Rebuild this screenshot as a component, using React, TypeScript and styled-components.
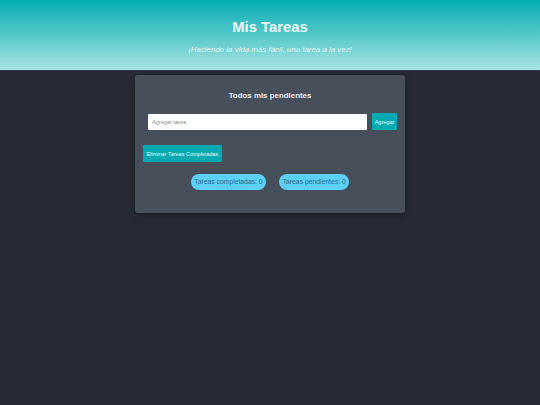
import React from "react";
import styled, { createGlobalStyle } from "styled-components";

const Global = createGlobalStyle`
  html, body { margin: 0; padding: 0; background: #262a35; }
  body { font-family: "Liberation Sans", Arial, sans-serif; min-height: 405px; }
  * { box-sizing: border-box; }
`;

const Header = styled.header`
  height: 71px;
  background: linear-gradient(180deg, #04acb4 0%, #55c8c8 50%, #a8e4e2 100%);
  border-bottom: 1px solid #2e3b47;
  display: flex;
  flex-direction: column;
  align-items: center;
  padding-top: 18px;
`;

const Title = styled.h1`
  margin: 0;
  font-size: 14.8px;
  line-height: 18px;
  font-weight: 700;
  color: #eafafa;
`;

const Subtitle = styled.p`
  margin: 9px 0 0;
  font-size: 7.9px;
  line-height: 10px;
  font-style: italic;
  color: rgba(240, 252, 252, 0.88);
`;

const Card = styled.main`
  width: 270px;
  margin: 4px auto 0;
  background: #474f5a;
  border-radius: 3px;
  box-shadow: 0 2px 6px rgba(0, 0, 0, 0.35);
  padding: 16px 8px 23px;
  display: flex;
  flex-direction: column;
`;

const CardTitle = styled.h2`
  margin: 0;
  text-align: center;
  font-size: 7.9px;
  line-height: 10px;
  font-weight: 700;
  color: #e9ecef;
`;

const InputRow = styled.div`
  margin-top: 12px;
  padding-left: 5px;
  display: flex;
  align-items: center;
  gap: 5px;
`;

const TaskInput = styled.input`
  flex: 1;
  min-width: 0;
  height: 16px;
  border: none;
  border-radius: 1px;
  background: #ffffff;
  padding: 0 4px;
  font-family: inherit;
  font-size: 5.6px;
  color: #333;
  outline: none;
  &::placeholder { color: #8a8a8a; }
`;

const TealButton = styled.button`
  height: 17px;
  border: none;
  border-radius: 1px;
  background: #03a9b0;
  color: #e8fbfb;
  font-family: inherit;
  font-size: 5.5px;
  padding: 0 3px;
  cursor: pointer;
  white-space: nowrap;
`;

const AddButton = styled(TealButton)`
  width: 25px;
  padding: 0;
`;

const ClearButton = styled(TealButton)`
  align-self: flex-start;
  margin-top: 15px;
  width: 79px;
`;

const Stats = styled.div`
  margin-top: 12px;
  display: flex;
  justify-content: center;
  gap: 13px;
`;

const Pill = styled.span`
  height: 16px;
  padding: 0 3.5px;
  border-radius: 8px;
  background: #5cd0f6;
  color: #2a6f90;
  font-size: 6.8px;
  line-height: 16px;
  white-space: nowrap;
`;

export default function App() {
  const completed = 0;
  const pending = 0;
  return (
    <>
      <Global />
      <Header>
        <Title>Mis Tareas</Title>
        <Subtitle>¡Haciendo la vida más fácil, una tarea a la vez!</Subtitle>
      </Header>
      <Card>
        <CardTitle>Todos mis pendientes</CardTitle>
        <InputRow>
          <TaskInput placeholder="Agregar tarea" />
          <AddButton>Agregar</AddButton>
        </InputRow>
        <ClearButton>Eliminar Tareas Completadas</ClearButton>
        <Stats>
          <Pill>Tareas completadas: {completed}</Pill>
          <Pill>Tareas pendientes: {pending}</Pill>
        </Stats>
      </Card>
    </>
  );
}
